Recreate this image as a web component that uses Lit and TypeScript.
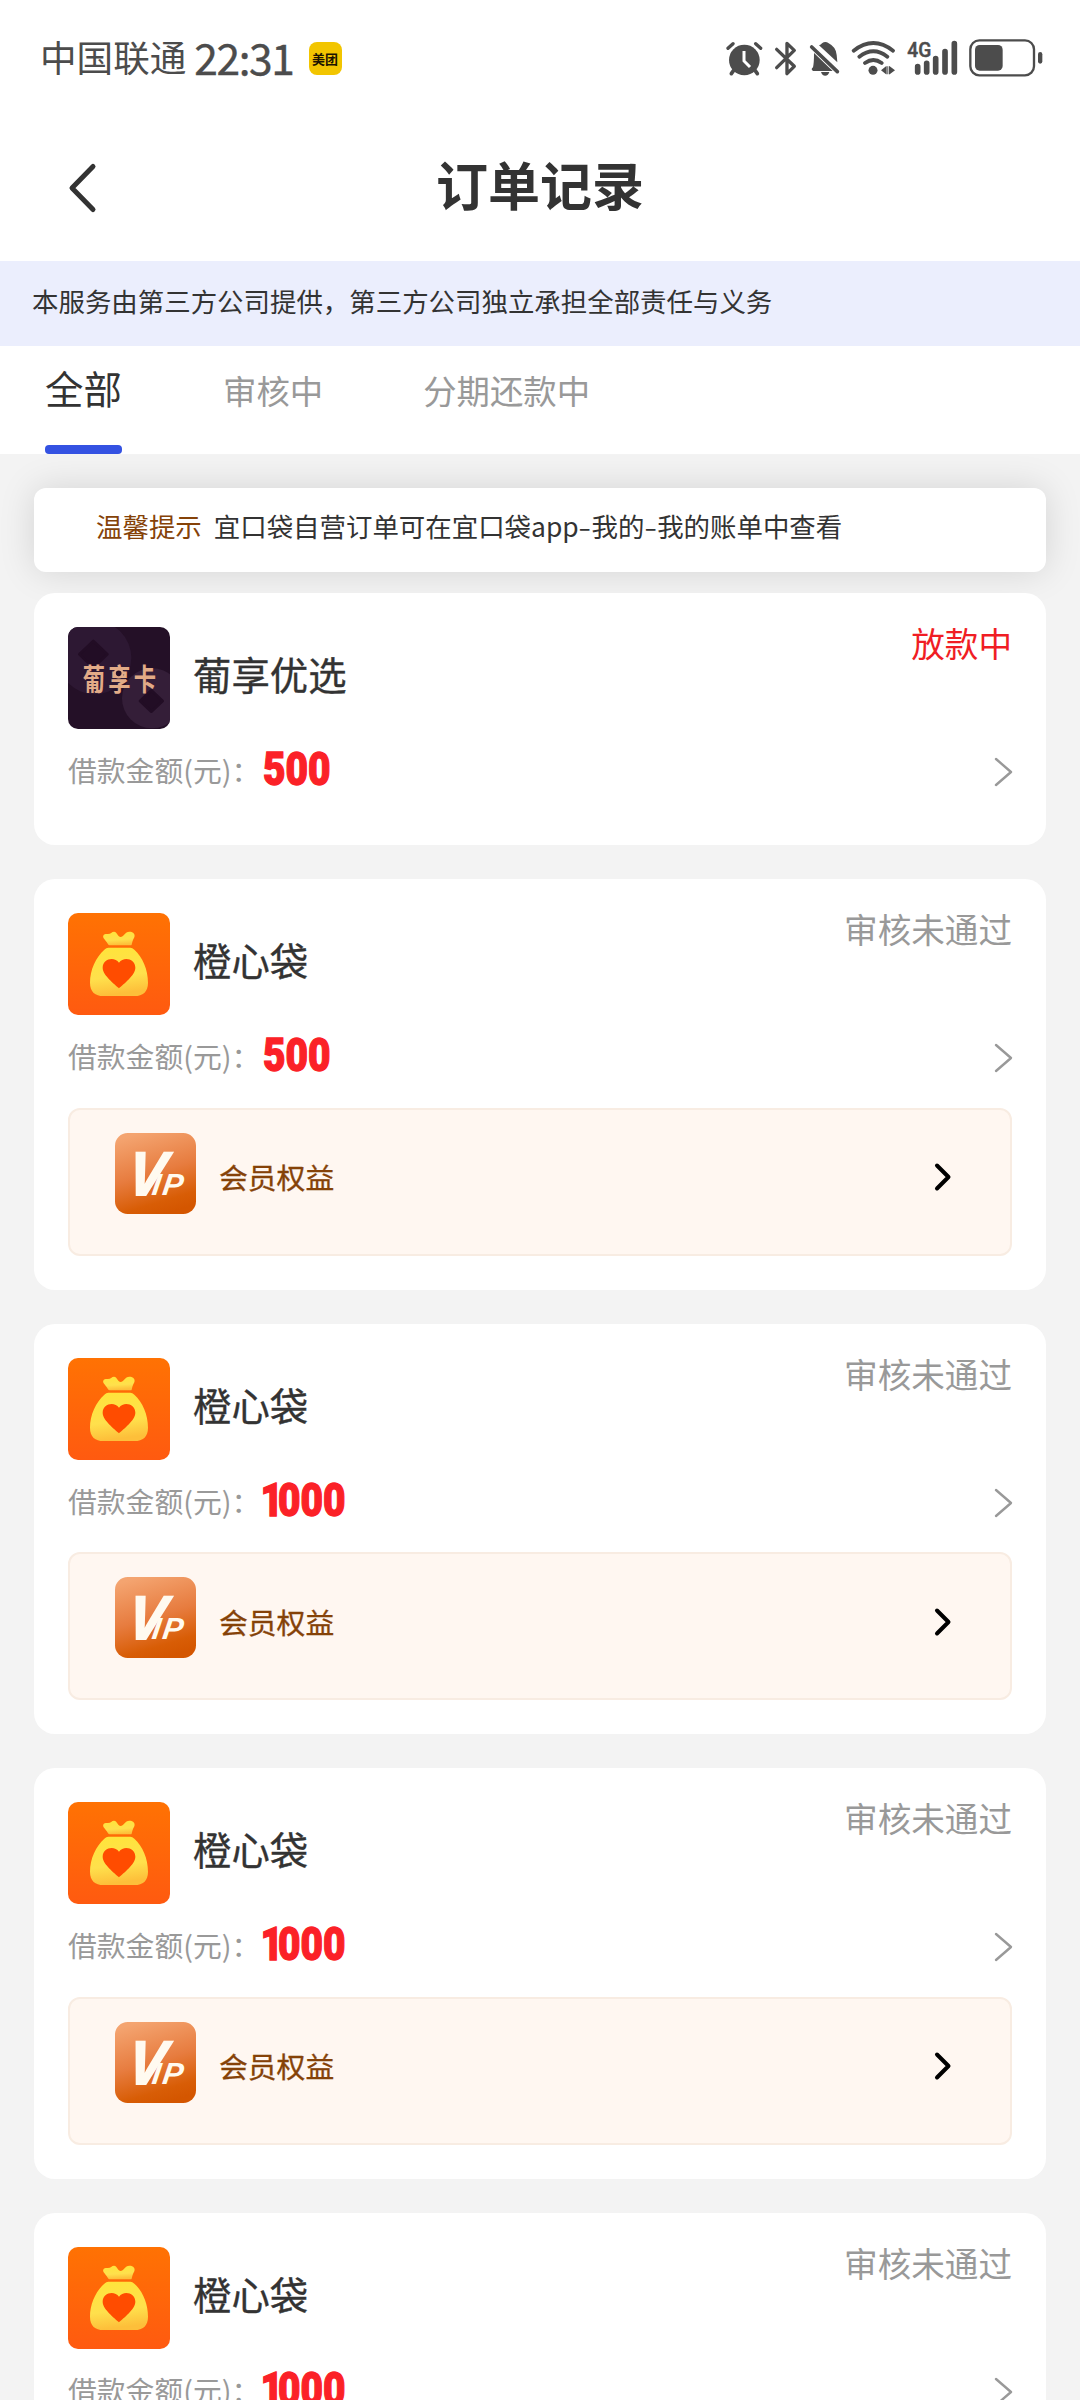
import { LitElement, html, css, nothing } from "lit";
import { customElement, property } from "lit/decorators.js";

interface Order {
  logo: "grape" | "bag";
  name: string;
  status: string;
  active?: boolean;
  amount: string;
  perk?: boolean;
}

const ORDERS: Order[] = [
  { logo: "grape", name: "葡享优选", status: "放款中", active: true, amount: "500" },
  { logo: "bag", name: "橙心袋", status: "审核未通过", amount: "500", perk: true },
  { logo: "bag", name: "橙心袋", status: "审核未通过", amount: "1000", perk: true },
  { logo: "bag", name: "橙心袋", status: "审核未通过", amount: "1000", perk: true },
  { logo: "bag", name: "橙心袋", status: "审核未通过", amount: "1000", perk: true },
];

const grapeLogo = html`<svg class="logo" viewBox="0 0 306 306">
  <rect width="306" height="306" fill="#241027" />
  <circle cx="80" cy="92" r="110" fill="#2d1833" />
  <circle cx="252" cy="214" r="90" fill="#341e38" />
  <path d="M76 42 118 82 76 122 34 82Z" fill="#220d25" stroke="#220d25" stroke-width="8" stroke-linejoin="round" />
  <path d="M250 190 284 222 250 254 216 222Z" fill="#220d25" stroke="#220d25" stroke-width="8" stroke-linejoin="round" />
  <text transform="translate(44 189) scale(.76 1)" font-size="88" letter-spacing="13" font-weight="700" fill="#e2ab87" font-family="Noto Sans CJK SC, sans-serif">葡享卡</text>
  <circle cx="152" cy="139" r="12" fill="#241027" stroke="#e2ab87" stroke-width="7" />
</svg>`;

const bagLogo = html`<svg class="logo" viewBox="0 0 306 306">
  <defs>
    <linearGradient id="bg" x1="0" y1="0" x2="0" y2="1"><stop offset="0" stop-color="#ff7203" /><stop offset="1" stop-color="#ff5a10" /></linearGradient>
    <linearGradient id="gold" x1="0" y1="0" x2=".15" y2="1"><stop offset="0" stop-color="#ffe43a" /><stop offset=".65" stop-color="#ffe04c" /><stop offset="1" stop-color="#fdbf3a" /></linearGradient>
  </defs>
  <rect width="306" height="306" fill="url(#bg)" />
  <path fill="url(#gold)" d="M107 76C102 66 110 62 118 63C128 64 131 56 138 56C147 56 150 72 158 72C166 72 171 56 184 56C197 56 202 64 199 73C194 81 193 87 191 95Q190 97 187 97H125Q122 97 120 94C116 87 112 82 107 76Z" />
  <path fill="url(#gold)" d="M121 104H187Q193 104 199 110C224 132 240 170 240 209C240 237 224 249 200 249H106C82 249 66 237 66 209C66 170 84 132 109 110Q115 104 121 104Z" />
  <path fill="#ff4c00" d="M153 226C141 214 104 187 104 164C104 137 139 129 153 149C167 129 202 137 202 164C202 187 165 214 153 226Z" />
</svg>`;

const vipLogo = html`<svg class="vip" viewBox="0 0 243 243">
  <defs>
    <linearGradient id="vip" x1=".3" y1="0" x2=".6" y2="1"><stop offset="0" stop-color="#f4a470" /><stop offset=".5" stop-color="#e77c3f" /><stop offset=".85" stop-color="#d85d06" /><stop offset="1" stop-color="#d45600" /></linearGradient>
  </defs>
  <rect width="243" height="243" rx="38" fill="url(#vip)" />
  <g transform="translate(33 186) skewX(-8)">
    <text x="0" y="0" font-size="184" fill="#fffaf0" stroke="#fffaf0" stroke-width="6" font-weight="700" font-style="italic" font-family="Liberation Sans, sans-serif"><tspan textLength="110" lengthAdjust="spacingAndGlyphs">V</tspan><tspan dx="-35" font-size="92" stroke-width="0">I</tspan><tspan dx="6" font-size="92" stroke-width="0">P</tspan></text>
  </g>
</svg>`;

@customElement("status-bar")
export class StatusBar extends LitElement {
  static styles = css`
    :host { display: flex; justify-content: space-between; height: 116px; padding: 0 37px 0 40px; box-sizing: border-box; color: #4c4c4c; }
    .left { display: flex; align-items: center; height: 113px; }
    .carrier { font-size: 36.6px; line-height: 40px; }
    .time { font-size: 42.5px; line-height: 44px; letter-spacing: -1.4px; margin-left: 8px; -webkit-text-stroke: 0.4px #4c4c4c; }
    .badge { display: flex; align-items: center; justify-content: center; width: 33px; height: 33px; border-radius: 8px; background: #f2c500; color: #1b1400; font-size: 13px; font-weight: 700; line-height: 14px; margin: 4px 0 0 15px; }
    .right { display: flex; gap: 11.3px; height: 40px; padding-top: 36.7px; }
    svg { display: block; height: 40px; }
  `;
  render() {
    const c = "#4c4c4c";
    return html`
      <div class="left">
        <span class="carrier">中国联通</span><span class="time">22:31</span><span class="badge">美团</span>
      </div>
      <div class="right">
        <svg viewBox="80 50 110 120" width="36.7">
          <circle cx="135" cy="119" r="46" fill=${c} />
          <g fill="none" stroke=${c} stroke-linecap="round">
            <path stroke-width="10" d="M86 84 101 70M184 84 169 70" />
            <path stroke-width="11" d="M103 150 96 160M167 150 174 160" />
          </g>
          <path d="M134 92V122L152 140" fill="none" stroke="#fff" stroke-width="9" />
        </svg>
        <svg viewBox="223 50 70 120" width="23.3">
          <path d="M231 87 284 138 262 160V69L284 90 231 142" fill="none" stroke=${c} stroke-width="10" stroke-linecap="round" stroke-linejoin="round" />
        </svg>
        <svg viewBox="326 50 92 120" width="30.7">
          <path fill=${c} d="M356 75Q362 73 365 69Q375 61 385 69Q407 80 409 104L411 126ZM341 98 397 152H338Q330 147 338 141Q341 128 341 98ZM362 155H387Q384 166 374.500 166Q365 166 362 155Z" />
          <path d="M334 80 411 154" stroke=${c} stroke-width="11" stroke-linecap="round" />
        </svg>
        <svg viewBox="452 50 134 120" width="44.7">
          <g fill="none" stroke=${c} stroke-width="11.500" stroke-linecap="round">
            <path d="M460 91Q519 45 578 91M477 109Q519 77 561 109M494 128Q519 110 544 128" />
          </g>
          <circle cx="518" cy="150" r="13.500" fill=${c} />
          <path fill=${c} d="M542 150 557 138V162ZM584 150 568 138V162Z" />
          <path stroke=${c} stroke-width="4" d="M560 138V162M567 138V162" />
        </svg>
        <svg viewBox="620 50 152 120" width="50.7">
          <text x="621" y="110" font-size="63" font-weight="500" fill=${c} stroke=${c} stroke-width="1.500" textLength="72" lengthAdjust="spacingAndGlyphs" font-family="Roboto, sans-serif">4G</text>
          <path d="M652 139V155M679 129V155M706 115V155M734 94V155M762 70V155" stroke=${c} stroke-width="17" stroke-linecap="round" />
        </svg>
        <svg viewBox="806 50 222 120" width="74">
          <rect x="810" y="60" width="191" height="105" rx="27" fill="none" stroke=${c} stroke-width="7" />
          <rect x="824" y="74" width="83" height="77" rx="14" fill=${c} />
          <rect x="1013" y="95" width="13" height="35" rx="6.500" fill=${c} />
        </svg>
      </div>
    `;
  }
}

@customElement("order-card")
export class OrderCard extends LitElement {
  @property({ attribute: false }) order!: Order;
  static styles = css`
    :host { display: block; padding: 34px; border-radius: 21px; background: #fff; }
    .head { display: flex; align-items: flex-start; height: 102px; }
    .logo { display: block; width: 102px; height: 102px; border-radius: 10px; flex: none; }
    .name { flex: 1; margin-left: 23px; font-size: 38.4px; line-height: 93px; color: #333; font-weight: 400; -webkit-text-stroke: 0.35px #333; }
    .status { font-size: 33.6px; line-height: 32px; color: #999; }
    .active { color: #f01d24; }
    .amount { display: flex; align-items: center; height: 80px; padding-bottom: 2px; }
    .label { font-size: 28.8px; line-height: 40px; color: #999; white-space: nowrap; width: 195px; padding-top: 2px; }
    .value { font-family: Roboto, "Liberation Sans", sans-serif; font-weight: 900; font-size: 46px; line-height: 46px; color: #fb2127; transform: scaleX(0.845); transform-origin: left; -webkit-text-stroke: 1.3px #fb2127; }
    .one { margin: 0 -6px 0 -3px; }
    .go { display: block; width: 22px; height: 32px; margin: 6px -2px 0 auto; }
    .perk { display: flex; align-items: center; height: 148px; box-sizing: border-box; padding: 0 57px 17px 45px; margin-top: 10.5px; border: 2px solid #f8ece2; border-radius: 12px; background: #fff7f1; }
    .vip { display: block; width: 81px; height: 81px; }
    .perk-name { flex: 1; margin: 8px 0 0 23px; font-size: 28.8px; line-height: 36px; color: #854208; -webkit-text-stroke: 0.3px #854208; }
    .more { display: block; width: 20px; height: 32px; margin-top: 8px; }
  `;
  render() {
    const o = this.order;
    return html`
      <div class="head">
        ${o.logo === "grape" ? grapeLogo : bagLogo}
        <span class="name">${o.name}</span>
        <span class="status ${o.active ? "active" : ""}">${o.status}</span>
      </div>
      <div class="amount">
        <span class="label">借款金额(元)：</span>
        <span class="value">${o.amount.startsWith("1") ? html`<span class="one">1</span>${o.amount.slice(1)}` : o.amount}</span>
        <svg class="go" viewBox="0 0 22 32"><path d="M4 3 19 16 4 29" fill="none" stroke="#999" stroke-width="2.400" stroke-linecap="round" stroke-linejoin="round" /></svg>
      </div>
      ${o.perk
        ? html`<div class="perk">
            ${vipLogo}
            <span class="perk-name">会员权益</span>
            <svg class="more" viewBox="0 0 20 32"><path d="M4 4.500 15.500 16 4 27.500" fill="none" stroke="#000" stroke-width="4" stroke-linecap="round" stroke-linejoin="round" /></svg>
          </div>`
        : nothing}
    `;
  }
}

@customElement("app-root")
export class AppRoot extends LitElement {
  static styles = css`
    :host { display: flex; flex-direction: column; width: 1080px; height: 2400px; overflow: hidden; background: #f3f3f3; font-family: "Noto Sans CJK SC", sans-serif; color: #333; }
    status-bar { flex: none; background: #fff; }
    .nav { display: grid; grid-template-columns: 120px 1fr 120px; align-items: center; flex: none; height: 145px; background: #fff; }
    .back { display: block; width: 34px; height: 52px; margin: 0 0 2px 65px; }
    .title { margin: 0; text-align: center; font-size: 52px; line-height: 60px; font-weight: 700; padding-bottom: 9px; }
    .notice { flex: none; height: 85px; line-height: 79px; padding-left: 32px; background: #ebeefd; font-size: 26.45px; white-space: nowrap; }
    .tabs { display: flex; flex: none; height: 108px; padding-left: 45px; background: #fff; color: #999; font-size: 33.4px; }
    .tab { line-height: 87px; margin-right: 100px; }
    .on { display: flex; flex-direction: column; color: #333; font-size: 38.4px; line-height: 83px; width: 77px; margin-right: 101px; }
    .on::after { content: ""; height: 9px; margin-top: 16px; border-radius: 4px; background: #3452e2; }
    .body { display: flex; flex-direction: column; gap: 34px; padding: 34px 34px 0; }
    .tip { height: 84px; line-height: 75px; padding-left: 62px; margin-bottom: -13px; border-radius: 12px; background: #fff; box-shadow: 0 0 36px rgba(0, 0, 0, 0.13); font-size: 26.45px; white-space: nowrap; }
    .tip-label { color: #854208; margin-right: 12px; }
    .dash { display: inline-block; transform: scaleX(1.4); margin: 0 1.8px; }
    order-card { flex: none; position: relative; }
  `;
  render() {
    const dash = html`<span class="dash">-</span>`;
    return html`
      <status-bar></status-bar>
      <div class="nav">
        <svg class="back" viewBox="0 0 34 52"><path d="M28 4.500 7 26 28 47.500" fill="none" stroke="#333" stroke-width="5" stroke-linecap="round" stroke-linejoin="round" /></svg>
        <h1 class="title">订单记录</h1>
      </div>
      <div class="notice">本服务由第三方公司提供，第三方公司独立承担全部责任与义务</div>
      <div class="tabs">
        <span class="tab on">全部</span><span class="tab">审核中</span><span class="tab">分期还款中</span>
      </div>
      <div class="body">
        <div class="tip"><span class="tip-label">温馨提示</span>宜口袋自营订单可在宜口袋app${dash}我的${dash}我的账单中查看</div>
        ${ORDERS.map((o) => html`<order-card .order=${o}></order-card>`)}
      </div>
    `;
  }
}
